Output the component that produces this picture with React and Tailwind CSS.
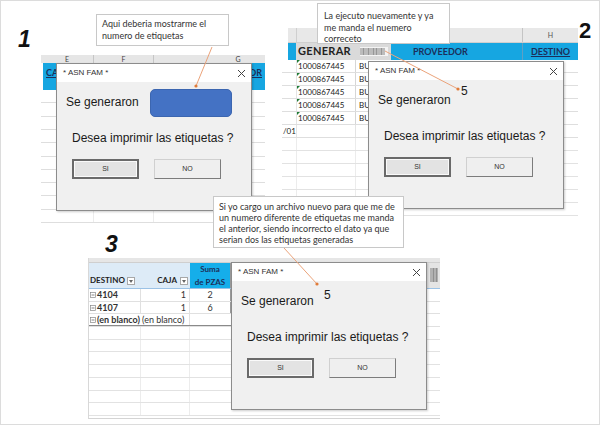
import React from "react";

const CloseX = () => (
  <svg width="9" height="9" viewBox="0 0 9 9">
    <path d="M1 1L8 8M8 1L1 8" stroke="#444" strokeWidth="1" />
  </svg>
);

function Dialog({ className, extra }) {
  return (
    <div
      className={`absolute w-[196px] h-[148px] bg-[#f0f0f0] border border-[#8c8c8c] shadow-[1px_1px_2px_rgba(0,0,0,0.2)] flex flex-col font-['Liberation_Sans',sans-serif] text-[#1a1a1a] ${className}`}
    >
      <div className="h-[18px] bg-white flex items-center justify-between pl-[6px] pr-[5px]">
        <span className="text-[8px] text-[#333]">* ASN FAM *</span>
        <CloseX />
      </div>
      <div className="flex items-center h-[28px] mt-[7px] pl-[9px]">
        <span className="w-[84px] text-[12px] leading-[16px] mt-[-3px]">Se generaron</span>
        {extra}
      </div>
      <div className="mt-[13px] pl-[15px] text-[12px] leading-[16px]">Desea imprimir las etiquetas ?</div>
      <div className="flex gap-[15px] pl-[15px] mt-[13px]">
        <div className="w-[67px] h-[20px] bg-[#e3e3e3] border-2 border-[#6a6a6a] shadow-[inset_0_0_0_1px_#fafafa] flex items-center justify-center text-[7px] text-[#333]">
          SI
        </div>
        <div className="w-[67px] h-[20px] bg-[#efefef] border border-[#d0d0d0] border-r-[#7c7c7c] border-b-[#7c7c7c] flex items-center justify-center text-[7px] text-[#333]">
          NO
        </div>
      </div>
    </div>
  );
}

const Barcode = ({ className }) => (
  <svg className={className} width="28" height="9" viewBox="0 0 28 9">
    <rect x="0" y="0" width="28" height="9" fill="#f4f4f4" />
    <path
      d="M1 1V8M3 1V8M4 1V8M6 1V8M8 1V8M9 1V8M11 1V8M13 1V8M14 1V8M16 1V8M17 1V8M19 1V8M21 1V8M22 1V8M24 1V8"
      stroke="#555"
      strokeWidth="0.7"
    />
  </svg>
);

const Minus = () => (
  <svg width="6" height="6" viewBox="0 0 6 6" className="mr-[1px] shrink-0">
    <rect x="0.5" y="0.5" width="5" height="5" fill="none" stroke="#888" strokeWidth="0.7" />
    <path d="M1.5 3H4.5" stroke="#555" strokeWidth="0.7" />
  </svg>
);

const FilterBtn = () => (
  <span className="w-[8px] h-[8px] bg-white border border-[#a8a8a8] flex items-center justify-center shrink-0">
    <svg width="4" height="3" viewBox="0 0 4 3">
      <path d="M0 0H4L2 3Z" fill="#666" />
    </svg>
  </span>
);

function Panel1() {
  const rows = Array.from({ length: 10 });
  return (
    <div className="absolute left-[40px] top-[54px] w-[224px] h-[168px] flex flex-col bg-white font-['Lato',sans-serif]">
      <div className="h-[8px] flex bg-[#e6e6e6] text-[7px] leading-[8px] text-[#444]">
        <div className="w-[53px] border-r border-[#c6c6c6] text-center">E</div>
        <div className="w-[60px] border-r border-[#c6c6c6] text-center">F</div>
        <div className="w-[57px]" />
        <div className="flex-1 text-center">G</div>
      </div>
      <div className="h-[28px] bg-[#16a6e1] ml-[2px] flex items-center justify-between px-[3px] text-[9px] font-bold text-[#1c2f5a]">
        <span className="underline mt-[-8px]">CA</span>
        <span className="underline mt-[-8px]">OR</span>
      </div>
      {rows.map((_, i) => (
        <div key={i} className="h-[13.3px] shrink-0 flex border-b border-[#dedede]">
          <div className="w-[53px] border-r border-[#ececec]" />
          <div className="w-[60px] border-r border-[#ececec]" />
          <div className="flex-1" />
        </div>
      ))}
    </div>
  );
}

function Panel2() {
  const data = Array.from({ length: 5 });
  const empty = Array.from({ length: 6 });
  return (
    <div className="absolute left-[281px] top-[27px] w-[296px] h-[183px] flex flex-col bg-white font-['Lato',sans-serif] text-[#222]">
      <div className="h-[15px] ml-[6px] flex bg-[#e8e8e8] border-b border-[#cfcfcf]">
        <div className="w-[9px] border-r border-[#cfcfcf]" />
        <div className="w-[226px] border-r border-[#c4c4c4]" />
        <div className="flex-1 text-center text-[7px] leading-[15px] text-[#555]">H</div>
      </div>
      <div className="h-[26px] ml-[6px] flex bg-[#16a6e1]">
        <div className="w-[8px]" />
        <div className="w-[95px] bg-[#dadada] flex items-center pl-[2px]">
          <span className="text-[11px] font-bold text-[#222] tracking-[0.3px]">GENERAR</span>
          <Barcode className="ml-[9px]" />
        </div>
        <div className="w-[132px] border-r border-[#5f9fc4] flex items-center pl-[22px] text-[9px] font-bold text-[#1c2f5a]">
          PROVEEDOR
        </div>
        <div className="flex-1 flex items-center justify-center text-[9px] font-bold text-[#1c2f5a] underline">
          DESTINO
        </div>
      </div>
      {data.map((_, i) => (
        <div key={i} className="h-[13px] shrink-0 flex border-b border-[#dedede] text-[8px] leading-[12px]">
          <div className="w-[15px] border-r border-[#e4e4e4]" />
          <div className="w-[59px] border-r border-[#d6d6d6] relative pl-[1px]">
            <span className="absolute left-0 top-0 w-0 h-0 border-t-[3px] border-t-[#1e7b34] border-r-[3px] border-r-transparent" />
            1000867445
          </div>
          <div className="flex-1 pl-[3px]">BU</div>
        </div>
      ))}
      <div className="h-[13px] shrink-0 flex border-b border-[#dedede] text-[8px] leading-[12px]">
        <div className="w-[15px] border-r border-[#e4e4e4] pl-[1px]">/01</div>
        <div className="w-[59px] border-r border-[#e4e4e4]" />
        <div className="flex-1" />
      </div>
      {empty.map((_, i) => (
        <div key={i} className="h-[13px] shrink-0 flex border-b border-[#e2e2e2]">
          <div className="w-[15px] border-r border-[#ececec]" />
          <div className="w-[59px] border-r border-[#ececec]" />
          <div className="flex-1" />
        </div>
      ))}
    </div>
  );
}

function Panel3() {
  const empty = Array.from({ length: 7 });
  return (
    <div className="absolute left-[87px] top-[257px] w-[352px] h-[161px] flex flex-col bg-white border-b border-[#d4d4d4] border-l border-l-[#d8d8d8] font-['Lato',sans-serif] text-[#222]">
      <div className="h-[5px] shrink-0 bg-[#e6e6e6] border-b border-[#cfcfcf]" />
      <div className="h-[26px] shrink-0 flex border-b border-[#9bc2e6]">
        <div className="w-[52px] bg-[#ddebf7] flex items-end pb-[3px] pl-[1px] gap-[2px] text-[8px] font-bold leading-[9px]">
          DESTINO <FilterBtn />
        </div>
        <div className="w-[49px] bg-[#ddebf7] flex items-end justify-end pb-[3px] pr-[2px] gap-[3px] text-[8px] font-bold leading-[9px]">
          CAJA <FilterBtn />
        </div>
        <div className="w-[42px] bg-[#15aeea] border-r-2 border-[#9a9a9a] text-[8px] font-bold text-[#1c2f5a] text-center leading-[13px]">
          Suma
          <br />
          de PZAS
        </div>
        <div className="flex-1" />
        <div className="w-[13px] bg-[#e4e4e4] flex items-start justify-center pt-[5px]">
          <svg width="8" height="14" viewBox="0 0 8 14">
            <path d="M1 0V14M3 0V14M4 0V14M6 0V14M7 0V14" stroke="#555" strokeWidth="0.7" />
          </svg>
        </div>
      </div>
      {[
        ["4104", "1", "2"],
        ["4107", "1", "6"],
      ].map(([a, b, c]) => (
        <div key={a} className="h-[12.7px] shrink-0 flex border-b border-[#e0e0e0] text-[9px] leading-[12px] text-[#333]">
          <div className="w-[52px] border-r border-[#e0e0e0] flex items-center pl-[1px] font-bold">
            <Minus />
            {a}
          </div>
          <div className="w-[49px] border-r border-[#e0e0e0] text-right pr-[3px]">{b}</div>
          <div className="w-[42px] text-center border-r-2 border-[#9a9a9a]">{c}</div>
          <div className="flex-1" />
        </div>
      ))}
      <div className="h-[12.7px] shrink-0 flex border-b border-[#e0e0e0] text-[9px] leading-[12px] text-[#333]">
        <div className="w-[143px] flex border-b border-[#8a8a8a]">
          <div className="w-[52px] flex items-center pl-[1px] font-bold overflow-hidden whitespace-nowrap">
            <Minus />
            (en blanco)
          </div>
          <div className="w-[49px] border-r border-[#e0e0e0] pl-[1px] whitespace-nowrap">(en blanco)</div>
        </div>
      </div>
      {empty.map((_, i) => (
        <div key={i} className="h-[12.7px] shrink-0 flex border-b border-[#e2e2e2]">
          <div className="w-[52px] border-r border-[#ececec]" />
          <div className="w-[49px] border-r border-[#ececec]" />
          <div className="flex-1" />
        </div>
      ))}
    </div>
  );
}

export default function App() {
  return (
    <div className="relative w-[600px] h-[425px] bg-white overflow-hidden border border-[#dcdcdc]">
      <Panel1 />
      <Panel2 />
      <Panel3 />

      <Dialog
        className="left-[55px] top-[62px]"
        extra={<div className="w-[82px] h-[28px] rounded-[5px] bg-[#4472c4] border border-[#3c66b0]" />}
      />
      <Dialog
        className="left-[367px] top-[60px]"
        extra={<span className="self-start text-[12px] leading-[14px] mt-[-3px] ml-[-1px]">5</span>}
      />
      <Dialog
        className="left-[230px] top-[261px]"
        extra={<span className="self-start text-[12px] leading-[14px] mt-[0px] ml-[-1px]">5</span>}
      />

      <div className="absolute left-[95px] top-[13px] w-[133px] h-[32px] bg-white border border-[#c8c8c8] pl-[5px] pt-[3px] font-['Lato',sans-serif] text-[9px] leading-[12px] text-[#333]">
        Aqui deberia mostrarme el
        <br />
        numero de etiquetas
      </div>
      <div className="absolute left-[316px] top-[2px] w-[133px] h-[41px] bg-white border border-[#c8c8c8] pl-[6px] pt-[6px] font-['Lato',sans-serif] text-[9px] leading-[11.5px] text-[#333]">
        La ejecuto nuevamente y ya
        <br />
        me manda el nuemero
        <br />
        correceto
      </div>
      <div className="absolute left-[212px] top-[195px] w-[191px] h-[52px] bg-white border border-[#c8c8c8] pl-[5px] pt-[4px] font-['Lato',sans-serif] text-[9px] leading-[11px] text-[#333]">
        Si yo cargo un archivo nuevo para que me de
        <br />
        un numero diferente de etiquetas me manda
        <br />
        el anterior, siendo incorrecto el dato ya que
        <br />
        serian dos las etiquetas generadas
      </div>

      <svg className="absolute left-0 top-0 pointer-events-none" width="600" height="425" viewBox="0 0 600 425">
        <g stroke="#eba37a" strokeWidth="1">
          <line x1="211" y1="46" x2="195" y2="85" />
          <line x1="384" y1="50" x2="457" y2="88" />
          <line x1="283" y1="247" x2="316" y2="283" />
        </g>
        <g fill="#e07b39">
          <circle cx="195" cy="85" r="1.6" />
          <circle cx="457" cy="88" r="1.6" />
          <circle cx="316" cy="283" r="1.6" />
        </g>
      </svg>

      <div className="absolute left-[17px] top-[27px] text-[23px] leading-none font-bold italic font-['Liberation_Sans',sans-serif] text-[#111]">
        1
      </div>
      <div className="absolute left-[578px] top-[19px] text-[22px] leading-none font-bold font-['Liberation_Sans',sans-serif] text-[#111]">
        2
      </div>
      <div className="absolute left-[104px] top-[232px] text-[23px] leading-none font-bold italic font-['Liberation_Sans',sans-serif] text-[#111]">
        3
      </div>
    </div>
  );
}
